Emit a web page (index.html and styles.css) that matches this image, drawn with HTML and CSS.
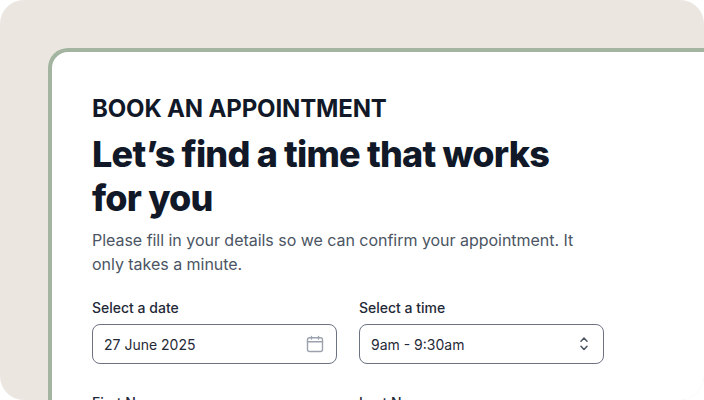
FILE: index.html
```html
<!DOCTYPE html>
<html lang="en">
<head>
    <meta charset="UTF-8">
    <meta name="viewport" content="width=device-width, initial-scale=1.0">
    <title>Book an appointment</title>
    <link rel="stylesheet" href="styles.css">
</head>
<body>

    <div class="frame">
        <div class="card">
            <p class="eyebrow">BOOK AN APPOINTMENT</p>
            <h1>Let’s find a time that works for you</h1>
            <p class="intro">Please fill in your details so we can confirm your appointment. It only takes a minute.</p>

            <div class="form-row">
                <div class="field">
                    <div class="field-label">Select a date</div>
                    <div class="input">
                        <span>27 June 2025</span>
                        <svg class="icon" width="20" height="20" viewBox="0 0 20 20" fill="none" stroke="#9ca3af" stroke-width="1.4" stroke-linecap="round" stroke-linejoin="round">
                            <rect x="2.500" y="3.800" width="15" height="13.700" rx="2"/>
                            <path d="M2.500 7.800h15M6.500 2.500v2.500M13.500 2.500v2.500"/>
                        </svg>
                    </div>
                </div>
                <div class="field">
                    <div class="field-label">Select a time</div>
                    <div class="input">
                        <span>9am - 9:30am</span>
                        <svg class="icon" width="20" height="20" viewBox="0 0 20 20" fill="none" stroke="#4b5563" stroke-width="1.500" stroke-linecap="round" stroke-linejoin="round">
                            <path d="M9 7.200L12 4l3 3.200M9 12.300l3 3.200 3-3.200"/>
                        </svg>
                    </div>
                </div>
            </div>

            <div class="form-row">
                <div class="field">
                    <div class="field-label">First Name</div>
                </div>
                <div class="field">
                    <div class="field-label">Last Name</div>
                </div>
            </div>
        </div>
    </div>

</body>
</html>
```

FILE: styles.css
```css
html, body {
    height: 100%;
}
body {
    margin: 0;
    background-color: #ffffff;
    font-family: 'Inter', sans-serif;
    color: #111827;
    overflow: hidden;
}
.frame {
    height: 400px;
    padding: 48px 0 0 48px;
    box-sizing: border-box;
    background-color: #ebe6e0;
    border-radius: 24px;
    overflow: hidden;
}
.card {
    height: 500px;
    padding: 41px 40px 40px;
    box-sizing: border-box;
    background-color: #ffffff;
    border: 4px solid #a3b5a0;
    border-right: none;
    border-radius: 20px 0 0 0;
}
.eyebrow {
    margin: 0 0 7px;
    font-size: 24px;
    line-height: 32px;
    font-weight: 700;
    letter-spacing: -0.15px;
}
h1 {
    width: 500px;
    margin: 0 0 8px;
    font-size: 36px;
    line-height: 44px;
    font-weight: 800;
    letter-spacing: -0.8px;
}
.intro {
    width: 512px;
    margin: 0 0 22px;
    font-size: 16px;
    line-height: 24px;
    letter-spacing: -0.03px;
    color: #4b5563;
}
.form-row {
    display: flex;
    gap: 22px;
    margin-bottom: 29px;
}
.field {
    width: 245px;
}
.field-label {
    margin-bottom: 6px;
    font-size: 14px;
    line-height: 20px;
    font-weight: 500;
    color: #1f2937;
}
.input {
    display: flex;
    align-items: center;
    justify-content: space-between;
    height: 40px;
    padding: 0 11px;
    box-sizing: border-box;
    border: 1px solid #6b7280;
    border-radius: 8px;
    font-size: 14px;
    color: #1f2937;
}
```
